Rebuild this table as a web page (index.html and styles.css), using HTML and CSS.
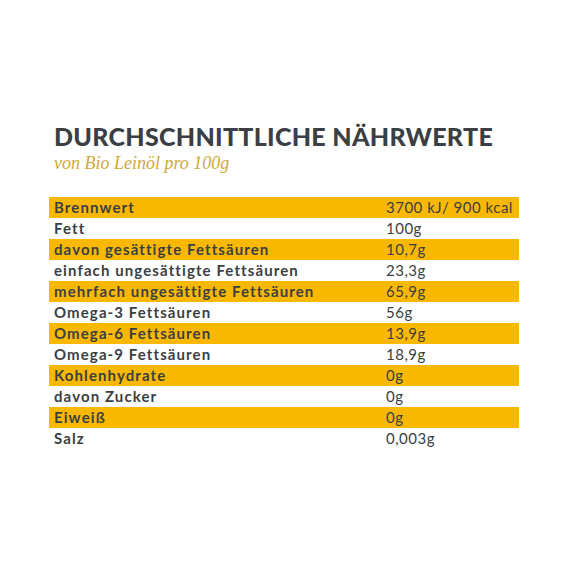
FILE: index.html
```html
<!DOCTYPE html>
<html lang="de">
<head>
<meta charset="utf-8">
<link rel="stylesheet" href="styles.css">
</head>
<body>
<div class="page">
  <h1 class="title">DURCHSCHNITTLICHE NÄHRWERTE</h1>
  <p class="subtitle">von Bio Leinöl pro 100g</p>
  <div class="table">
    <div class="row hl"><span class="label">Brennwert</span><span class="value">3700 kJ/ 900 kcal</span></div>
    <div class="row"><span class="label">Fett</span><span class="value">100g</span></div>
    <div class="row hl"><span class="label">davon gesättigte Fettsäuren</span><span class="value">10,7g</span></div>
    <div class="row"><span class="label">einfach ungesättigte Fettsäuren</span><span class="value">23,3g</span></div>
    <div class="row hl"><span class="label">mehrfach ungesättigte Fettsäuren</span><span class="value">65,9g</span></div>
    <div class="row"><span class="label">Omega-3 Fettsäuren</span><span class="value">56g</span></div>
    <div class="row hl"><span class="label">Omega-6 Fettsäuren</span><span class="value">13,9g</span></div>
    <div class="row"><span class="label">Omega-9 Fettsäuren</span><span class="value">18,9g</span></div>
    <div class="row hl"><span class="label">Kohlenhydrate</span><span class="value">0g</span></div>
    <div class="row"><span class="label">davon Zucker</span><span class="value">0g</span></div>
    <div class="row hl"><span class="label">Eiweiß</span><span class="value">0g</span></div>
    <div class="row"><span class="label">Salz</span><span class="value">0,003g</span></div>
  </div>
</div>
</body>
</html>
```
FILE: styles.css
```css
html, body {
  margin: 0;
  padding: 0;
  background: #ffffff;
}
.page {
  padding: 121px 50px 0 49px;
  font-family: "Lato", "DejaVu Sans", sans-serif;
  color: #3b3f44;
}
.title {
  margin: 0 0 0 5px;
  font-size: 25px;
  line-height: 30px;
  font-weight: 900;
  letter-spacing: 0.3px;
  color: #3b3f44;
}
.subtitle {
  margin: 2px 0 0 5px;
  font-family: "Liberation Serif", serif;
  font-style: italic;
  font-size: 18px;
  line-height: 20px;
  color: #d0a93a;
}
.table {
  margin-top: 24px;
  width: 470px;
}
.row {
  display: grid;
  grid-template-columns: 332px 1fr;
  height: 21px;
  align-items: center;
  padding-left: 5px;
  font-size: 15px;
  line-height: 21px;
}
.row.hl {
  background: #fbb800;
}
.label {
  font-weight: 700;
  letter-spacing: 1.1px;
}
.value {
  font-weight: 400;
  letter-spacing: 0.5px;
}
```
